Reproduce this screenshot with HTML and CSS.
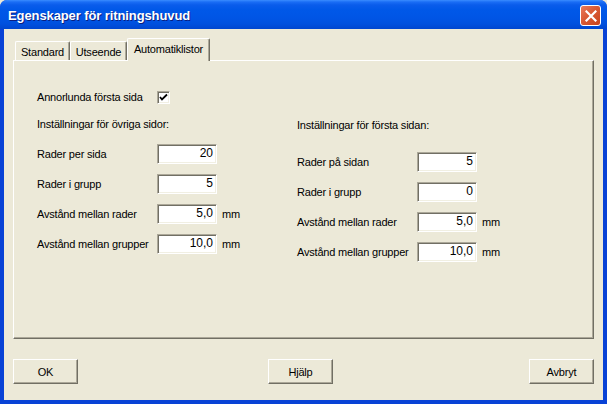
FILE: index.html
```html
<!DOCTYPE html>
<html lang="sv">
<head>
<meta charset="utf-8">
<title>Egenskaper för ritningshuvud</title>
<link rel="stylesheet" href="styles.css">
</head>
<body>
<div class="window">
  <div class="titlebar">
    <span class="title">Egenskaper för ritningshuvud</span>
    <span class="close" aria-label="Stäng">
      <svg width="12" height="12" viewBox="0 0 12 12"><path d="M1.5 1.5 L10.5 10.5 M10.5 1.5 L1.5 10.5" stroke="#fff" stroke-width="2.2" stroke-linecap="square"/></svg>
    </span>
  </div>
  <div class="client">
    <div class="tabs">
      <div class="tab t1">Standard</div>
      <div class="tab t2">Utseende</div>
      <div class="tab selected">Automatiklistor</div>
    </div>
    <div class="panel">
      <div class="check-row">
        <span class="check-label">Annorlunda första sida</span>
        <span class="checkbox">
          <svg width="9" height="9" viewBox="0 0 9 9"><path d="M1 4 L3 6.5 L8 1.5" fill="none" stroke="#000" stroke-width="1.8"/></svg>
        </span>
      </div>
      <div class="columns">
        <div class="col left">
          <div class="heading">Inställningar för övriga sidor:</div>
          <div class="rows">
            <div class="row"><span class="label">Rader per sida</span><span class="field">20</span></div>
            <div class="row"><span class="label">Rader i grupp</span><span class="field">5</span></div>
            <div class="row"><span class="label">Avstånd mellan rader</span><span class="field">5,0</span><span class="unit">mm</span></div>
            <div class="row"><span class="label">Avstånd mellan grupper</span><span class="field">10,0</span><span class="unit">mm</span></div>
          </div>
        </div>
        <div class="col right">
          <div class="heading">Inställningar för första sidan:</div>
          <div class="rows">
            <div class="row"><span class="label">Rader på sidan</span><span class="field">5</span></div>
            <div class="row"><span class="label">Rader i grupp</span><span class="field">0</span></div>
            <div class="row"><span class="label">Avstånd mellan rader</span><span class="field">5,0</span><span class="unit">mm</span></div>
            <div class="row"><span class="label">Avstånd mellan grupper</span><span class="field">10,0</span><span class="unit">mm</span></div>
          </div>
        </div>
      </div>
    </div>
    <div class="buttons">
      <span class="btn">OK</span>
      <span class="btn help">Hjälp</span>
      <span class="btn cancel">Avbryt</span>
    </div>
  </div>
</div>
</body>
</html>
```
FILE: styles.css
```css
html, body {
  margin: 0;
  padding: 0;
  background: #ECE9D8;
}
body {
  width: 607px;
  height: 404px;
  overflow: hidden;
  font-family: "Liberation Sans", Arial, sans-serif;
  font-size: 11px;
  letter-spacing: -0.2px;
  color: #000;
}
.window {
  width: 607px;
  height: 404px;
  box-sizing: border-box;
  background: #0842D6;
  border-radius: 7px 7px 0 0;
  display: flex;
  flex-direction: column;
  overflow: hidden;
}
.titlebar {
  height: 29px;
  flex: none;
  display: flex;
  align-items: center;
  justify-content: space-between;
  padding: 0 6px 0 8px;
  background: linear-gradient(to bottom, #3A8CFF 0px, #1A6DF5 2px, #0A5CEB 5px, #0058E8 10px, #0055E5 18px, #0050DE 24px, #0046CF 29px);
}
.title {
  color: #fff;
  font-family: "Liberation Sans", Arial, sans-serif;
  font-weight: bold;
  font-size: 13px;
  letter-spacing: -0.1px;
  text-shadow: 1px 1px 0 #0A1E80;
  margin-top: 1px;
}
.close {
  width: 19px;
  height: 19px;
  border: 1px solid #fff;
  border-radius: 3px;
  background: linear-gradient(135deg, #E97A5C 0%, #D95A35 45%, #C9431C 100%);
  display: flex;
  align-items: center;
  justify-content: center;
  margin-top: 2px;
}
.client {
  flex: 1;
  margin: 0 4px 4px 4px;
  background: #ECE9D8;
  padding: 9px 9px 0 9px;
  display: flex;
  flex-direction: column;
}
.tabs {
  height: 22px;
  display: flex;
  align-items: flex-end;
  padding-left: 2px;
  position: relative;
  z-index: 1;
}
.tab {
  box-sizing: border-box;
  height: 19px;
  border-top: 1px solid #fff;
  border-left: 1px solid #fff;
  border-right: 1px solid #716F64;
  box-shadow: inset -1px 0 0 #ACA899;
  border-radius: 2px 2px 0 0;
  display: flex;
  align-items: center;
  justify-content: center;
  padding-top: 1px;
}
.t1 { width: 55px; }
.t2 { width: 57px; }
.tab.selected {
  width: 83px;
  height: 23px;
  margin-bottom: -1px;
  background: #ECE9D8;
  padding-bottom: 3px;
}
.panel {
  box-sizing: border-box;
  height: 279px;
  border-top: 1px solid #fff;
  border-left: 1px solid #fff;
  border-right: 1px solid #716F64;
  border-bottom: 1px solid #716F64;
  box-shadow: inset -1px -1px 0 #ACA899;
  padding: 29px 0 0 23px;
}
.check-row {
  display: flex;
  align-items: center;
  height: 14px;
}
.check-label {
  width: 120px;
}
.checkbox {
  box-sizing: border-box;
  width: 13px;
  height: 13px;
  background: #fff;
  border-top: 1px solid #ACA899;
  border-left: 1px solid #ACA899;
  border-right: 1px solid #fff;
  border-bottom: 1px solid #fff;
  box-shadow: inset 1px 1px 0 #716F64, inset -1px -1px 0 #F1EFE2;
  display: flex;
  align-items: center;
  justify-content: center;
}
.columns {
  display: flex;
  margin-top: 12px;
}
.col {
  width: 260px;
}
.heading {
  height: 16px;
  line-height: 16px;
}
.right .heading { margin-top: 1px; }
.rows {
  display: flex;
  flex-direction: column;
  gap: 10px;
  margin-top: 12px;
}
.right .rows { margin-top: 19px; }
.row {
  display: flex;
  align-items: center;
  height: 20px;
}
.label {
  width: 120px;
}
.field {
  box-sizing: border-box;
  width: 60px;
  height: 20px;
  background: #fff;
  border-top: 1px solid #ACA899;
  border-left: 1px solid #ACA899;
  border-right: 1px solid #fff;
  border-bottom: 1px solid #fff;
  box-shadow: inset 1px 1px 0 #716F64, inset -1px -1px 0 #F1EFE2;
  text-align: right;
  padding: 0 3px 0 0;
  line-height: 17px;
  font-size: 12px;
  letter-spacing: 0;
}
.unit {
  margin-left: 5px;
}
.buttons {
  display: flex;
  margin-top: 20px;
}
.btn {
  box-sizing: border-box;
  width: 65px;
  height: 25px;
  border-top: 1px solid #fff;
  border-left: 1px solid #fff;
  border-right: 1px solid #716F64;
  border-bottom: 1px solid #716F64;
  box-shadow: inset -1px -1px 0 #ACA899;
  display: flex;
  align-items: center;
  justify-content: center;
}
.help { margin-left: 190px; }
.cancel { margin-left: auto; }
```
